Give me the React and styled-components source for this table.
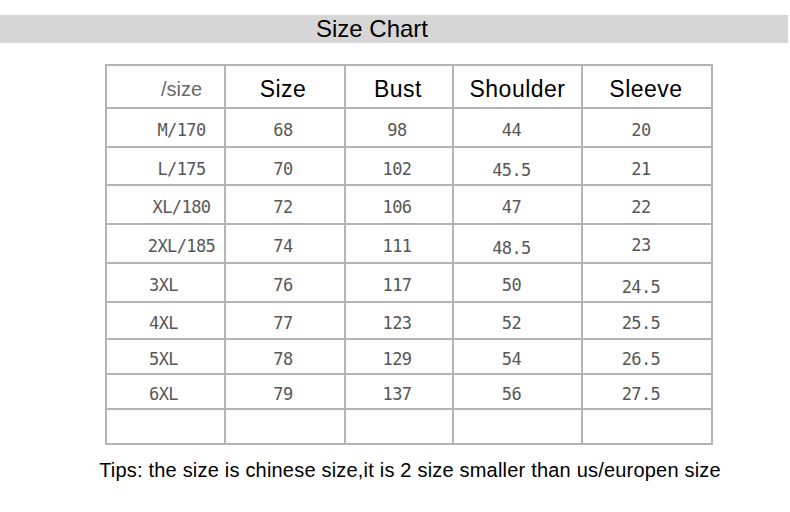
import React from 'react'
import styled, { createGlobalStyle, css } from 'styled-components'

const GlobalStyle = createGlobalStyle`
  html, body {
    margin: 0;
    padding: 0;
    background: #fff;
  }
  body {
    font-family: "Liberation Sans", Arial, sans-serif;
  }
`

const LINE = '#b4b4b4'

const Page = styled.div`
  width: 790px;
  height: 512px;
  padding-top: 15px;
  box-sizing: border-box;
  overflow: hidden;
`

const TitleBar = styled.div`
  height: 28px;
  margin-right: 2px;
  background: #d6d6d6;
  display: flex;
  align-items: center;
  justify-content: center;
  padding-right: 44px;
`

const Title = styled.h1`
  margin: 0;
  font-size: 24px;
  font-weight: normal;
  color: #000;
  line-height: 28px;
`

const Table = styled.table`
  margin: 21px 0 0 105px;
  border-collapse: collapse;
  table-layout: fixed;
  width: 608px;
`

const Row = styled.tr`
  height: ${props => props.$h}px;
`

const cellBase = css`
  border: 2px solid ${LINE};
  padding: 0;
  text-align: center;
  vertical-align: middle;
  white-space: nowrap;
`

const HeadCell = styled.th`
  ${cellBase};
  padding-top: 5px;
  padding-right: ${props => props.$shift || 0}px;
  font-family: "Liberation Sans", Arial, sans-serif;
  font-size: 23px;
  letter-spacing: 0.5px;
  font-weight: normal;
  color: #000;
  ${props =>
    props.$muted &&
    css`
      font-size: 20px;
      letter-spacing: 0;
      color: #6a6a6a;
      padding-left: 32px;
    `}
`

const Cell = styled.td`
  ${cellBase};
  padding-top: ${props => 5 + (props.$dy || 0) * 2}px;
  padding-right: ${props => props.$shift || 0}px;
  font-family: "DejaVu Sans Mono", monospace;
  font-size: 17px;
  letter-spacing: -0.6px;
  color: #575757;
  ${props =>
    props.$label &&
    css`
      padding-right: 0;
      padding-left: 32px;
    `}
  ${props =>
    props.$left &&
    css`
      text-align: left;
      padding-left: 42px;
    `}
`

const Tips = styled.p`
  margin: 14px 0 0;
  padding-left: 30px;
  text-align: center;
  font-size: 20px;
  letter-spacing: 0.2px;
  line-height: 22px;
  color: #000;
`

const widths = [119, 120, 108, 129, 130]
const shifts = [0, 4, 4, 12, 12]

const rows = [
  { h: 39, cells: ['M/170', '68', '98', '44', '20'] },
  { h: 38, cells: ['L/175', '70', '102', ['45.5', 1], ['21', 0]] },
  { h: 39, cells: ['XL/180', '72', '106', '47', '22'] },
  { h: 39, cells: ['2XL/185', '74', '111', ['48.5', 2], ['23', -1]] },
  { h: 39, left: true, cells: ['3XL', '76', '117', '50', ['24.5', 2]] },
  { h: 37, left: true, cells: ['4XL', '77', '123', '52', '25.5'] },
  { h: 35, left: true, cells: ['5XL', '78', '129', '54', '26.5'] },
  { h: 35, left: true, cells: ['6XL', '79', '137', '56', '27.5'] },
  { h: 35, cells: ['', '', '', '', ''] },
]

export default function App() {
  return (
    <Page>
      <GlobalStyle />
      <TitleBar>
        <Title>Size Chart</Title>
      </TitleBar>
      <Table>
        <colgroup>
          {widths.map((w, i) => (
            <col key={i} style={{ width: w }} />
          ))}
        </colgroup>
        <thead>
          <Row $h={43}>
            <HeadCell $muted>/size</HeadCell>
            <HeadCell $shift={4}>Size</HeadCell>
            <HeadCell $shift={2}>Bust</HeadCell>
            <HeadCell>Shoulder</HeadCell>
            <HeadCell $shift={2}>Sleeve</HeadCell>
          </Row>
        </thead>
        <tbody>
          {rows.map((row, r) => (
            <Row key={r} $h={row.h}>
              {row.cells.map((c, i) => {
                const [text, dy] = Array.isArray(c) ? c : [c, 0]
                return (
                  <Cell
                    key={i}
                    $dy={dy}
                    $shift={shifts[i]}
                    $label={i === 0 && !row.left}
                    $left={i === 0 && row.left}
                  >
                    {text}
                  </Cell>
                )
              })}
            </Row>
          ))}
        </tbody>
      </Table>
      <Tips>Tips: the size is chinese size,it is 2 size smaller than us/europen size</Tips>
    </Page>
  )
}
